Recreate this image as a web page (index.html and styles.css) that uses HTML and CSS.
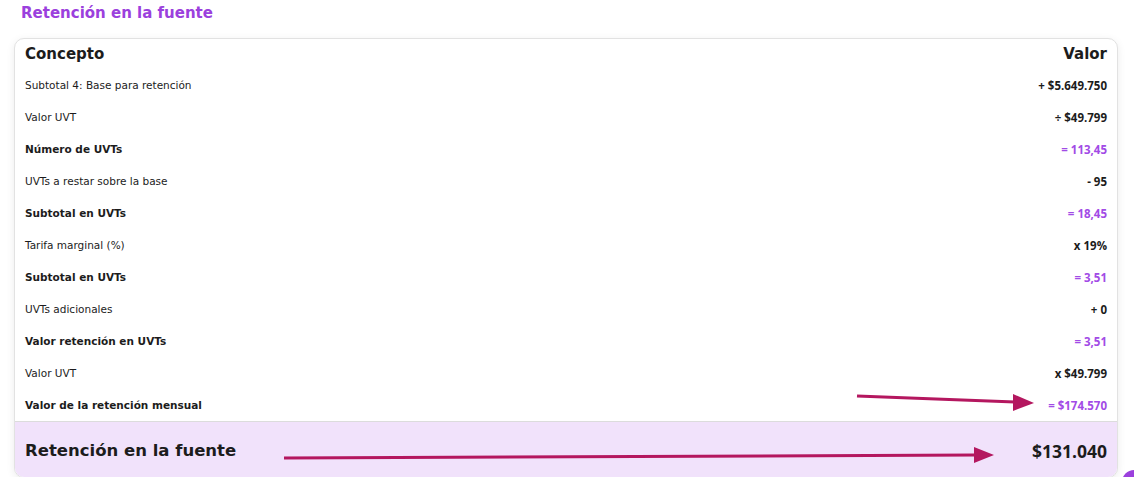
FILE: index.html
```html
<!DOCTYPE html>
<html lang="es">

<head>
  <meta charset="UTF-8">
  <meta name="viewport" content="width=device-width, initial-scale=1.0">
  <title>Retención en la fuente</title>
  <link rel="stylesheet" href="styles.css">
</head>

<body>
  <h2 class="section-title">Retención en la fuente</h2>

  <div class="card">
    <div class="row head">
      <span>Concepto</span>
      <span>Valor</span>
    </div>
    <div class="row">
      <span>Subtotal 4: Base para retención</span>
      <span class="val">+ $5.649.750</span>
    </div>
    <div class="row">
      <span>Valor UVT</span>
      <span class="val">÷ $49.799</span>
    </div>
    <div class="row strong">
      <span>Número de UVTs</span>
      <span class="val result">= 113,45</span>
    </div>
    <div class="row">
      <span>UVTs a restar sobre la base</span>
      <span class="val">- 95</span>
    </div>
    <div class="row strong">
      <span>Subtotal en UVTs</span>
      <span class="val result">= 18,45</span>
    </div>
    <div class="row">
      <span>Tarifa marginal (%)</span>
      <span class="val">x 19%</span>
    </div>
    <div class="row strong">
      <span>Subtotal en UVTs</span>
      <span class="val result">= 3,51</span>
    </div>
    <div class="row">
      <span>UVTs adicionales</span>
      <span class="val">+ 0</span>
    </div>
    <div class="row strong">
      <span>Valor retención en UVTs</span>
      <span class="val result">= 3,51</span>
    </div>
    <div class="row">
      <span>Valor UVT</span>
      <span class="val">x $49.799</span>
    </div>
    <div class="row strong">
      <span>Valor de la retención mensual</span>
      <span class="val result">= $174.570</span>
    </div>
    <div class="total">
      <span>Retención en la fuente</span>
      <span class="total-value">$131.040</span>
    </div>
  </div>

  <!-- annotation arrows drawn over the screenshot -->
  <svg class="arrows" width="1134" height="477" viewBox="0 0 1134 477">
    <line x1="857" y1="396" x2="1015" y2="402" stroke="#b4175f" stroke-width="3"/>
    <polygon points="1013,394 1034,403 1013,411" fill="#b4175f"/>
    <line x1="284" y1="458" x2="975" y2="455" stroke="#b4175f" stroke-width="3"/>
    <polygon points="974,447 994,455 974,463" fill="#b4175f"/>
  </svg>

  <div class="chat-bubble"></div>
</body>

</html>
```

FILE: styles.css
```css
body {
  font-family: 'DejaVu Sans', sans-serif;
  margin: 0;
  padding: 0 16px 0 14px;
  background-color: #ffffff;
  color: #1c1c1c;
  position: relative;
  overflow: hidden;
  height: 477px;
}

.section-title {
  margin: 0;
  padding-left: 7px;
  height: 38px;
  line-height: 26px;
  font-size: 15px;
  font-weight: bold;
  color: #9b40dd;
}

.card {
  border: 1px solid #e2e2e2;
  border-radius: 10px;
  box-shadow: 0 2px 8px rgba(0, 0, 0, 0.08);
  overflow: hidden;
  background-color: #ffffff;
}

.row {
  display: flex;
  justify-content: space-between;
  align-items: center;
  height: 32px;
  padding: 0 10px;
  font-size: 10.5px;
}

.row.head {
  height: 30px;
  font-size: 15px;
  font-weight: bold;
}

.row.strong span:first-child {
  font-weight: bold;
}

.val {
  font-family: 'Open Sans', sans-serif;
  font-weight: bold;
  font-size: 11.5px;
}

.result {
  color: #a24be6;
}

.total {
  display: flex;
  justify-content: space-between;
  align-items: center;
  height: 53px;
  padding: 2px 10px 0;
  background-color: #f1e2fb;
  border-top: 1px solid #dcdcdc;
  font-size: 16.5px;
  font-weight: bold;
}

.total-value {
  font-family: 'Open Sans', sans-serif;
  font-size: 17.5px;
}

.arrows {
  position: absolute;
  left: 0;
  top: 0;
  pointer-events: none;
}

.chat-bubble {
  position: absolute;
  left: 1122px;
  top: 470px;
  width: 24px;
  height: 24px;
  border-radius: 50%;
  background-color: #9b40dd;
}
```
